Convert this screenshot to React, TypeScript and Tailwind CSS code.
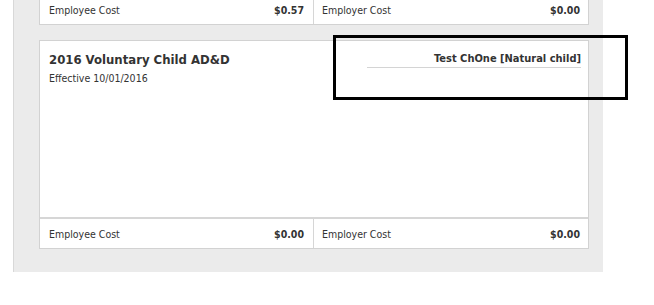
import React from "react";

const font = { fontFamily: '"DejaVu Sans Condensed", "DejaVu Sans", sans-serif', fontStretch: "condensed" as const };

function CostRow({ left, right }: { left: string; right: string }) {
  return (
    <div className="flex h-[29px] text-[10.5px] text-[#333]">
      <div className="flex w-[274px] items-center justify-between border-r border-[#d6d6d6] pl-[9px] pr-[9px] pt-[2px]">
        <span>Employee Cost</span>
        <span className="font-bold">{left}</span>
      </div>
      <div className="flex flex-1 items-center justify-between pl-[8px] pr-[8px] pt-[2px]">
        <span>Employer Cost</span>
        <span className="font-bold">{right}</span>
      </div>
    </div>
  );
}

export default function App() {
  return (
    <div className="relative h-[305px] w-[654px] overflow-hidden bg-white" style={font}>
      <div className="ml-[13px] w-[590px] border-l border-[#d8d8d8] bg-[#ebebeb] pb-[23px] pl-[25px] pr-[14px]">
        <div className="-mt-[5px] border-x border-b border-[#d2d2d2] bg-white">
          <CostRow left="$0.57" right="$0.00" />
        </div>
        <div className="mt-[15px] border border-[#d2d2d2] bg-white">
          <div className="flex h-[176px] justify-between">
            <div className="pl-[9px] pt-[11px] text-[#333]">
              <div className="text-[13px] font-bold leading-[16px]">2016 Voluntary Child AD&amp;D</div>
              <div className="mt-[3px] text-[10.5px] leading-[14px]">Effective 10/01/2016</div>
            </div>
            <div className="pr-[7px] pt-[11px]">
              <div className="w-[214px] border-b border-[#d4d4d4] pb-[1px] text-right text-[11px] font-bold leading-[14px] text-[#333]">
                Test ChOne [Natural child]
              </div>
            </div>
          </div>
          <div className="border-t-2 border-[#d6d6d6]">
            <CostRow left="$0.00" right="$0.00" />
          </div>
        </div>
      </div>
      <div className="absolute left-[333px] top-[35px] h-[65px] w-[295px] border-[3px] border-black" />
    </div>
  );
}
